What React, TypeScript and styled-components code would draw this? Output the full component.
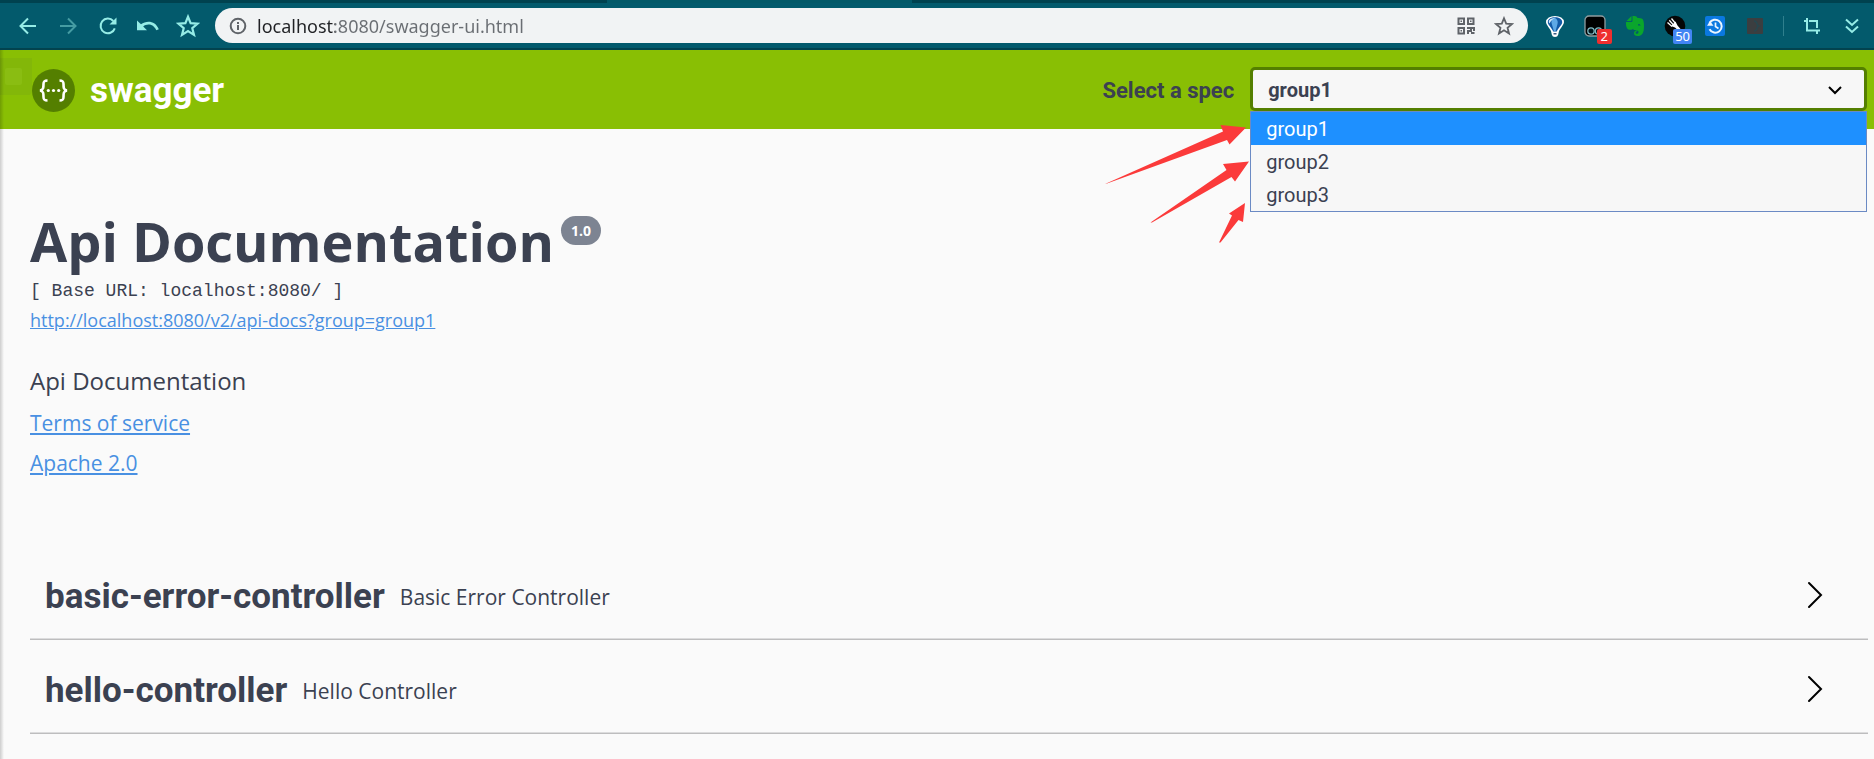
import React, { useState } from "react";
import styled, { createGlobalStyle } from "styled-components";

const GlobalStyle = createGlobalStyle`
  * { box-sizing: border-box; }
  html { background: #fafafa; }
  body {
    margin: 0;
    background: #fafafa;
    color: #3b4151;
    font-family: "Open Sans", "Noto Sans", sans-serif;
  }
  button, input, select { font: inherit; color: inherit; }
`;

const Page = styled.div`
  display: flex;
  flex-direction: column;
  min-height: 100vh;
`;

const TabStrip = styled.div`
  display: flex;
  height: 3px;
  background: #035968;
`;

const InactiveTabs = styled.div<{ $grow: number }>`
  flex: ${(p) => p.$grow};
  background: #00424f;
`;

const ActiveTab = styled.div`
  flex: 305;
`;

const Toolbar = styled.div`
  display: flex;
  align-items: center;
  height: 47px;
  padding: 0 10px 0 16px;
  background: #035a6c;
  border-bottom: 2px solid #02434f;
`;

const NavGroup = styled.nav`
  display: flex;
  gap: 16px;
  margin-right: 15px;
`;

const IconButton = styled.button<{ $size?: number; $color?: string; $faded?: boolean }>`
  display: flex;
  align-items: center;
  justify-content: center;
  position: relative;
  flex: none;
  width: ${(p) => p.$size ?? 24}px;
  height: ${(p) => p.$size ?? 24}px;
  padding: 0;
  border: 0;
  background: none;
  color: ${(p) => p.$color ?? "#96ece6"};
  opacity: ${(p) => (p.$faded ? 0.45 : 1)};
`;

const AddressBar = styled.div`
  display: flex;
  align-items: center;
  flex: 1;
  height: 35px;
  padding: 0 12px;
  border-radius: 18px;
  background: #f1f3f4;
  color: #5f6368;
`;

const AddressInput = styled.input`
  flex: 1;
  min-width: 0;
  height: 28px;
  margin-left: 8px;
  padding: 0;
  border: 0;
  outline: 0;
  font-family: "Noto Sans", sans-serif;
  font-size: 18px;
  line-height: 28px;
  color: transparent;
  background: linear-gradient(90deg, #202124 78px, #6a6e73 78px);
  -webkit-background-clip: text;
  background-clip: text;
`;

const AddressActions = styled.div`
  display: flex;
  gap: 14px;
`;

const Extensions = styled.div`
  display: flex;
  align-items: center;
  gap: 16px;
  margin-left: 15px;
`;

const Badge = styled.span<{ $color: string }>`
  position: absolute;
  top: 15px;
  right: -5px;
  height: 15px;
  padding: 0 4px;
  border-radius: 2px;
  background: ${(p) => p.$color};
  color: #fff;
  font-family: "Noto Sans", sans-serif;
  font-size: 13px;
  line-height: 15px;
`;

const WideBadge = styled(Badge)`
  padding: 0 2px;
`;

const Divider = styled.span`
  width: 1px;
  height: 20px;
  background: #2f7f8d;
`;

const Content = styled.div`
  position: relative;
  flex: 1;
`;

const EdgeShade = styled.div`
  position: absolute;
  top: 0;
  bottom: 0;
  left: 0;
  width: 4px;
  background: linear-gradient(90deg, rgba(0, 0, 0, 0.18), rgba(0, 0, 0, 0));
`;

const Topbar = styled.header`
  position: relative;
  display: flex;
  align-items: center;
  height: 79px;
  padding: 0 7px 1px 32px;
  background: #89bf04;
`;

const GhostPanel = styled.div`
  position: absolute;
  top: 8px;
  left: 0;
  width: 32px;
  height: 37px;
  padding: 10px 0 0 5px;
  border-radius: 0 0 4px 0;
  background: #83b709;
`;

const GhostMark = styled.div`
  width: 17px;
  height: 17px;
  border-radius: 2px;
  background: #8abd12;
`;

const Brand = styled.a`
  position: relative;
  display: flex;
  align-items: center;
  flex: 7;
  gap: 15px;
  padding-top: 3px;
  color: #fff;
  font-family: Roboto, sans-serif;
  font-size: 35px;
  font-weight: 700;
  line-height: 40px;
  text-decoration: none;
`;

const SpecForm = styled.form`
  display: flex;
  align-items: center;
  flex: 5;
  gap: 16px;
  font-family: Roboto, sans-serif;
`;

const SpecLabel = styled.label`
  flex: none;
  padding-top: 3px;
  font-size: 22px;
  font-weight: 700;
`;

const SelectWrap = styled.div`
  position: relative;
  flex: 1;
`;

const SpecSelect = styled.select`
  display: block;
  width: 100%;
  height: 44px;
  padding: 2px 15px 0;
  border: 3px solid #547f00;
  border-radius: 5px;
  outline: 0;
  appearance: none;
  background: #f7f7f7;
  font-size: 20px;
  font-weight: 700;
`;

const SelectChevron = styled.svg`
  position: absolute;
  top: 19px;
  right: 24px;
  pointer-events: none;
`;

const OptionList = styled.ul`
  position: absolute;
  z-index: 2;
  top: 100%;
  left: 0;
  right: 0;
  margin: 0;
  padding: 0;
  border: 1px solid #6b8ac4;
  background: #f7f7f7;
  list-style: none;
`;

const Option = styled.li<{ $active: boolean }>`
  height: 33px;
  padding: 1px 15px 0;
  background: ${(p) => (p.$active ? "#1e90ff" : "transparent")};
  color: ${(p) => (p.$active ? "#fff" : "#3b4151")};
  font-size: 20px;
  font-weight: 400;
  line-height: 32px;
`;

const Arrows = styled.svg`
  position: absolute;
  z-index: 3;
  top: 53px;
  right: 100%;
  pointer-events: none;
`;

const Main = styled.main`
  padding: 74px 6px 24px 30px;
`;

const Info = styled.section`
  display: flex;
  flex-direction: column;
  align-items: flex-start;
  margin-bottom: 67px;
`;

const TitleRow = styled.div`
  display: flex;
  align-items: flex-start;
  gap: 7px;
`;

const Title = styled.h1`
  margin: 0;
  font-size: 54px;
  font-weight: 700;
  line-height: 76px;
`;

const Version = styled.span`
  margin-top: 13px;
  padding: 0 10px;
  border-radius: 15px;
  background: #7d8492;
  color: #fff;
  font-size: 14px;
  font-weight: 700;
  line-height: 29px;
`;

const BaseUrl = styled.pre`
  margin: 0;
  font-family: "Liberation Mono", monospace;
  font-size: 18px;
  line-height: 24px;
`;

const DocLink = styled.a`
  margin-top: 1px;
  color: #4990e2;
  font-size: 18px;
  line-height: 32px;
`;

const Description = styled.p`
  margin: 27px 0 0;
  font-size: 24px;
  line-height: 36px;
`;

const InfoLink = styled.a`
  margin-top: 8px;
  color: #4990e2;
  font-size: 21px;
  line-height: 32px;
`;

const TagRow = styled.button`
  display: flex;
  align-items: center;
  width: 100%;
  height: 94px;
  padding: 8px 45px 0 15px;
  border: 0;
  border-bottom: 1px solid #bdbdbe;
  box-shadow: inset 0 -1px #dcdcdd;
  background: none;
  text-align: left;
`;

const TagName = styled.span`
  font-family: Roboto, sans-serif;
  font-size: 35px;
  font-weight: 700;
  line-height: 44px;
`;

const TagText = styled.span`
  flex: 1;
  margin-left: 15px;
  font-size: 21px;
  line-height: 30px;
`;

const TagChevron = styled.svg`
  margin-bottom: 4px;
`;

const stroke = { fill: "none", stroke: "currentColor" } as const;

const BackIcon = () => (
  <svg width="18" height="18" viewBox="0 0 18 18" {...stroke} strokeWidth="2">
    <path d="M17 9H2M9 1.5 1.5 9 9 16.5" />
  </svg>
);

const ForwardIcon = () => (
  <svg width="18" height="18" viewBox="0 0 18 18" {...stroke} strokeWidth="2">
    <path d="M1 9h15M9 1.5 16.5 9 9 16.5" />
  </svg>
);

const ReloadIcon = () => (
  <svg width="20" height="20" viewBox="0 0 20 20" {...stroke} strokeWidth="2">
    <path d="M16.8 12.3A7.3 7.3 0 1 1 15.3 5" />
    <path d="M18.5 1.5v7h-7z" fill="currentColor" stroke="none" />
  </svg>
);

const UndoIcon = () => (
  <svg width="22" height="14" viewBox="0 0 22 14" fill="currentColor">
    <path d="M0 1.5 4 5.3C9.500 1 18.500 1.500 21.800 10.300L19.300 11.300C16.500 4.800 10 4.300 6.200 7.500L10 11.300H0z" />
  </svg>
);

const StarIcon = ({ size = 22 }: { size?: number }) => (
  <svg width={size} height={size} viewBox="0 0 22 22" {...stroke} strokeWidth="2">
    <path d="M11 2.500 13.400 8.400 19.800 8.800 14.900 12.900 16.500 19.200 11 15.700 5.500 19.200 7.100 12.900 2.200 8.800 8.600 8.400z" />
  </svg>
);

const InfoIcon = () => (
  <svg width="18" height="18" viewBox="0 0 18 18" {...stroke} strokeWidth="2">
    <circle cx="9" cy="9" r="7.300" />
    <path d="M9 8v5M9 5v2" />
  </svg>
);

const QrIcon = () => (
  <svg width="18" height="18" viewBox="0 0 18 18" {...stroke} strokeWidth="2">
    <path d="M1.500 1.500h5.500v5.500H1.500zM11 1.500h5.500v5.500H11zM1.500 11h5.500v5.500H1.500z" />
    <path d="M10 11h4v3h-3v3M14 11h3.500M17 10v4M14 16h3.500" />
    <path d="M3.500 4.250h1.500M13 4.250h1.500M3.500 13.750h1.500" strokeWidth="1.500" />
  </svg>
);

const BalloonIcon = () => (
  <svg width="20" height="22" viewBox="0 0 20 22">
    <path
      d="M10 2C5.500 2 2 4 2 7.300c0 2.700 3.500 5 5 8.700l.8 3.500c.2.800 1 1.500 2.200 1.500s2-.7 2.200-1.500L13 16c1.500-3.700 5-6 5-8.700C18 4 14.500 2 10 2z"
      fill="#fff"
      stroke="#fff"
      strokeWidth="2"
    />
    <path d="M10 2.300C6 2.300 2.800 4.200 2.800 7.200c0 2.600 3.700 5 5.400 9.300h3.600c1.700-4.300 5.400-6.700 5.400-9.300 0-3-3.200-4.900-7.200-4.900z" fill="#125aa6" />
    <path d="M9 2.500C6.500 4.500 6 6.500 6.800 9L9 16.500h1.500L12.500 9c.7-2.500 0-5-3.500-6.500z" fill="#5ea9e6" />
    <path d="M4 5.500C5.500 3.700 8 3 10 3 8 4 6 5.500 4.500 8.500 3.800 7.500 3.600 6.500 4 5.500z" fill="#cfe8fa" />
    <path d="M8.500 18h3v1.500h-3z" fill="#3a5c80" />
  </svg>
);

const MonkeyIcon = () => (
  <svg width="22" height="22" viewBox="0 0 22 22">
    <rect x="1" y="1" width="20" height="20" rx="4" fill="#000" stroke="#8f9c9f" strokeWidth="1.300" />
    <circle cx="7" cy="16" r="3.200" fill="#02171c" stroke="#7fb8c2" strokeWidth="1.300" />
    <circle cx="14.500" cy="16" r="3.200" fill="#02171c" stroke="#7fb8c2" strokeWidth="1.300" />
  </svg>
);

const ElephantIcon = () => (
  <svg width="20" height="20" viewBox="0 0 20 20" fill="#0aa52c">
    <path d="M6.500 0 1.500 5h4.200c.6 0 .8-.3.8-.8z" />
    <path d="M7.500 0v4.700c0 .9-.5 1.300-1.300 1.300H1c-.3 3.500.8 7 2.500 7.500 1.500.4 4 .5 4.500-.8.500 1.300 1.300 1.300 3 1.500 2 .2 2.500 1 2.500 2 0 1.200-.7 1.500-2 1.500-.8 0-1-.5-.9-1.200.1-.8.8-1.100 1.500-1v-1c-2 0-3.100 1-3.100 2.700C9 19 10 20 12.500 20c4.500 0 6.500-2.500 6.500-10 0-3-.5-6-1.500-7-.8-.8-3.500-1-5-1C12 .8 11 0 9.500 0zM13.500 8c1 0 2 .5 2 1.800-.8-.4-1.700-.5-2.500-.3 0-.7.1-1.200.5-1.500z" />
  </svg>
);

const ForkIcon = () => (
  <svg width="22" height="22" viewBox="0 0 22 22">
    <circle cx="11" cy="11" r="10.300" fill="#060606" />
    <path d="M3.500 7.500 8 11.500M5.300 5.300 9.500 10M7.500 3.500 11.500 8.500" stroke="#fff" strokeWidth="1.300" fill="none" />
    <path d="M7 11l4.500-4.500 2 4L20 18l-1.500 1.500-7.500-7z" fill="#fff" />
  </svg>
);

const HistoryIcon = () => (
  <svg width="20" height="20" viewBox="0 0 20 20" fill="none">
    <rect width="20" height="20" rx="2" fill="#0a78e0" />
    <path d="M4.500 7A6.500 6.500 0 1 1 4.500 13.300" stroke="#eaf5ff" strokeWidth="2" />
    <path d="M2 9.800h6.500L5 5z" fill="#eaf5ff" />
    <path d="M10.500 6.500v4l3 2" stroke="#eaf5ff" strokeWidth="1.700" />
  </svg>
);

const DarkIcon = () => (
  <svg width="16" height="16" viewBox="0 0 16 16" fill="none">
    <rect width="16" height="16" rx="1" fill="#3b3e40" />
    <path d="M7 3c4 0 2 4 4.500 5C9 9 11 13 7 13" stroke="#27474f" strokeWidth="1.500" />
  </svg>
);

const CropIcon = () => (
  <svg width="18" height="18" viewBox="0 0 18 18" {...stroke} strokeWidth="2">
    <path d="M4 1v12.500h13M1 4h2M6 4h8v7M14 14v3" />
  </svg>
);

const MoreIcon = () => (
  <svg width="14" height="16" viewBox="0 0 14 16" {...stroke} strokeWidth="2">
    <path d="m1 1.500 6 5.500 6-5.500M1 8.500l6 5.500 6-5.500" />
  </svg>
);

const SwaggerMark = () => (
  <svg width="43" height="43" viewBox="0 0 43 43" fill="none" stroke="#fff" strokeWidth="2.600">
    <circle cx="21.500" cy="21.500" r="21.500" fill="#547f00" stroke="none" />
    <path d="M15.500 11.500c-3.500 0-4 1-4 3.500 0 3.500 0 6-3.500 6.500 3.500.5 3.500 3 3.500 6.500 0 2.500.5 3.500 4 3.500" />
    <path d="M27.500 11.500c3.500 0 4 1 4 3.500 0 3.500 0 6 3.500 6.500-3.500.5-3.500 3-3.500 6.500 0 2.500-.5 3.500-4 3.500" />
    <g fill="#fff" stroke="none">
      <circle cx="16.300" cy="21.500" r="1.600" />
      <circle cx="21.500" cy="21.500" r="1.600" />
      <circle cx="26.700" cy="21.500" r="1.600" />
    </g>
  </svg>
);

const specs = ["group1", "group2", "group3"];

const tags = [
  { name: "basic-error-controller", text: "Basic Error Controller" },
  { name: "hello-controller", text: "Hello Controller" },
];

export default function App() {
  const [spec, setSpec] = useState(specs[0]);
  return (
    <Page>
      <GlobalStyle />
      <TabStrip>
        <InactiveTabs $grow={607} />
        <ActiveTab />
        <InactiveTabs $grow={962} />
      </TabStrip>
      <Toolbar>
        <NavGroup aria-label="Browser">
          <IconButton aria-label="Back"><BackIcon /></IconButton>
          <IconButton aria-label="Forward" $faded><ForwardIcon /></IconButton>
          <IconButton aria-label="Reload"><ReloadIcon /></IconButton>
          <IconButton aria-label="Undo"><UndoIcon /></IconButton>
          <IconButton aria-label="Bookmarks"><StarIcon size={24} /></IconButton>
        </NavGroup>
        <AddressBar>
          <IconButton aria-label="Site information" $color="#5f6368" $size={22}><InfoIcon /></IconButton>
          <AddressInput aria-label="Address" defaultValue="localhost:8080/swagger-ui.html" />
          <AddressActions>
            <IconButton aria-label="QR code" $color="#5f6368"><QrIcon /></IconButton>
            <IconButton aria-label="Bookmark this page" $color="#5f6368"><StarIcon size={20} /></IconButton>
          </AddressActions>
        </AddressBar>
        <Extensions>
          <IconButton aria-label="Balloon"><BalloonIcon /></IconButton>
          <IconButton aria-label="Scripts"><MonkeyIcon /><Badge $color="#ee2f2f">2</Badge></IconButton>
          <IconButton aria-label="Notes"><ElephantIcon /></IconButton>
          <IconButton aria-label="Fork"><ForkIcon /><WideBadge $color="#4285f4">50</WideBadge></IconButton>
          <IconButton aria-label="History"><HistoryIcon /></IconButton>
          <IconButton aria-label="Disabled extension"><DarkIcon /></IconButton>
          <Divider />
          <IconButton aria-label="Crop"><CropIcon /></IconButton>
          <IconButton aria-label="More"><MoreIcon /></IconButton>
        </Extensions>
      </Toolbar>
      <Content>
        <Topbar>
          <GhostPanel><GhostMark /></GhostPanel>
          <Brand href="#"><SwaggerMark />swagger</Brand>
          <SpecForm>
            <SpecLabel htmlFor="spec">Select a spec</SpecLabel>
            <SelectWrap>
              <SpecSelect id="spec" value={spec} onChange={(e) => setSpec(e.target.value)}>
                {specs.map((s) => <option key={s}>{s}</option>)}
              </SpecSelect>
              <SelectChevron width="16" height="10" viewBox="0 0 16 10" fill="none" stroke="#000" strokeWidth="2">
                <path d="m2 1 6 6 6-6" />
              </SelectChevron>
              <OptionList>
                {specs.map((s) => (
                  <Option key={s} $active={s === spec} onClick={() => setSpec(s)}>{s}</Option>
                ))}
              </OptionList>
              <Arrows width="152" height="130" viewBox="1100 120 152 130" fill="#fb3a3a">
                <path d="M1107 184 1225 131.500 1222.500 125 1248 127.500 1231.500 144.500 1229 140 1109 183.500z" />
                <path d="M1152.500 222.500 1228.500 170 1225 164 1251 161.500 1237 181.500 1233.500 177 1154 222.500z" />
                <path d="M1221 242.500 1234 215.500 1231 213.500 1247 203 1245 222 1240.500 220 1222.500 242.500z" />
              </Arrows>
            </SelectWrap>
          </SpecForm>
        </Topbar>
        <Main>
          <Info>
            <TitleRow>
              <Title>Api Documentation</Title>
              <Version>1.0</Version>
            </TitleRow>
            <BaseUrl>[ Base URL: localhost:8080/ ]</BaseUrl>
            <DocLink href="#">http://localhost:8080/v2/api-docs?group=group1</DocLink>
            <Description>Api Documentation</Description>
            <InfoLink href="#">Terms of service</InfoLink>
            <InfoLink href="#">Apache 2.0</InfoLink>
          </Info>
          {tags.map((t) => (
            <TagRow key={t.name}>
              <TagName>{t.name}</TagName>
              <TagText>{t.text}</TagText>
              <TagChevron width="16" height="28" viewBox="0 0 16 28" fill="none" stroke="#000" strokeWidth="2" strokeLinecap="round">
                <path d="M2 2 14 14 2 26" />
              </TagChevron>
            </TagRow>
          ))}
        </Main>
        <EdgeShade />
      </Content>
    </Page>
  );
}
